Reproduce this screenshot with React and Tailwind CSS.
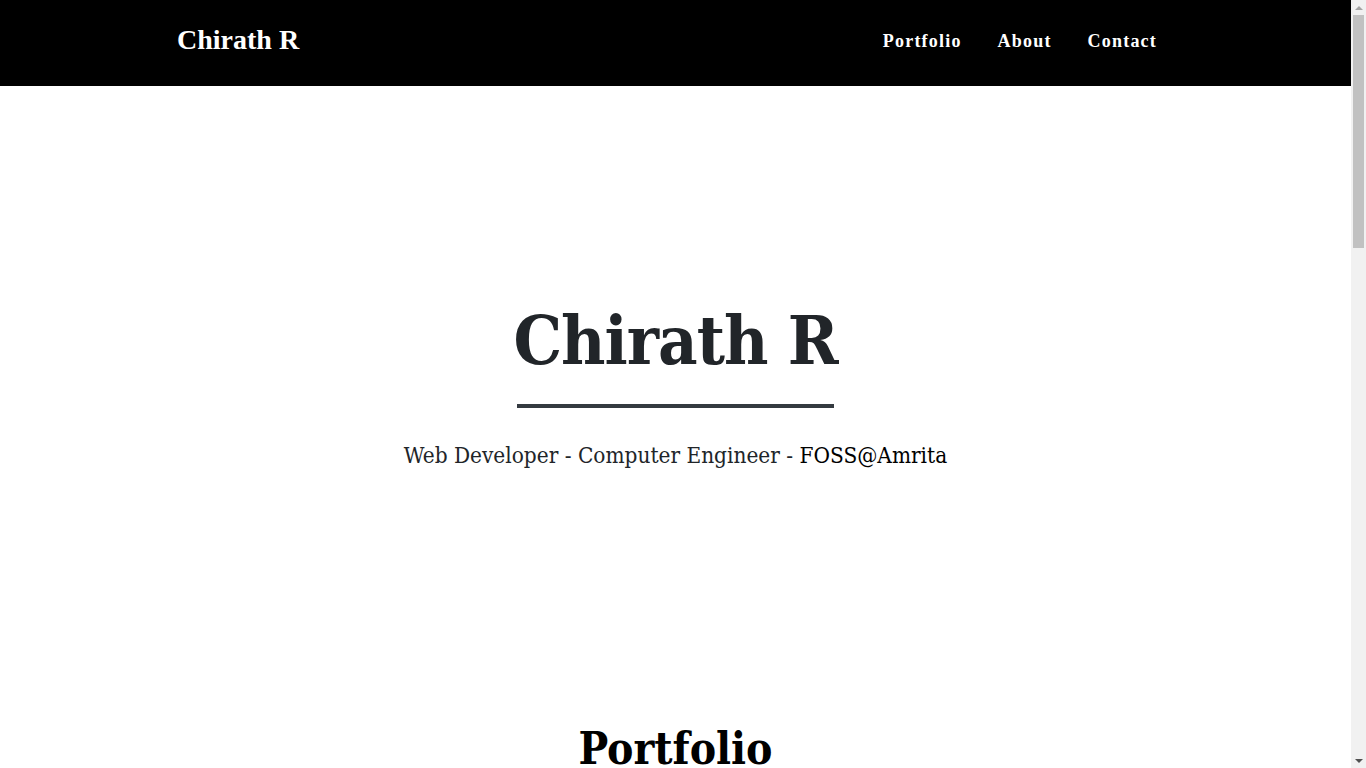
const App = () => {
  return (
    <div className="flex bg-white text-[#212529]">
      <div className="w-[1351px] shrink-0">
        <nav className="h-[86px] bg-black flex items-center justify-between pl-[177px] pr-[194px]">
          <a className="text-white text-[28px] font-bold font-['Liberation_Serif',serif] leading-none pb-[6px]" href="#">
            Chirath R
          </a>
          <ul className="flex items-center gap-[36px] text-white text-[18px] font-bold tracking-[1.2px] font-['Liberation_Serif',serif] pb-[4px]">
            <li><a href="#portfolio">Portfolio</a></li>
            <li><a href="#about">About</a></li>
            <li><a href="#contact">Contact</a></li>
          </ul>
        </nav>

        <header className="flex flex-col items-center pt-[214px] pb-[252px] font-['DejaVu_Serif',serif] [font-stretch:condensed]">
          <h1 className="text-[68px] font-bold leading-[1.2] tracking-[-1px]">Chirath R</h1>
          <hr className="w-[317px] border-0 h-[4px] bg-[#343a40] mt-[22px]" />
          <p className="mt-[32px] text-[22.4px] leading-[1.4]">
            Web Developer - Computer Engineer - <a href="#" className="text-black">FOSS@Amrita</a>
          </p>
        </header>

        <section id="portfolio" className="flex flex-col items-center min-h-[1600px] font-['DejaVu_Serif',serif] [font-stretch:condensed]">
          <h2 className="text-[44px] font-bold text-black leading-[1.2]">Portfolio</h2>
        </section>
      </div>

      <aside className="w-[15px] h-screen sticky top-0 bg-[#f1f1f1] flex flex-col items-center">
        <div className="h-[15px] flex items-center justify-center">
          <div className="w-0 h-0 border-x-[4px] border-x-transparent border-b-[4px] border-b-[#a3a3a3]" />
        </div>
        <div className="w-[11px] h-[233px] bg-[#c1c1c1]" />
        <div className="flex-1" />
        <div className="h-[15px] flex items-center justify-center">
          <div className="w-0 h-0 border-x-[4px] border-x-transparent border-t-[4px] border-t-[#505050]" />
        </div>
      </aside>
    </div>
  )
}

export default App
